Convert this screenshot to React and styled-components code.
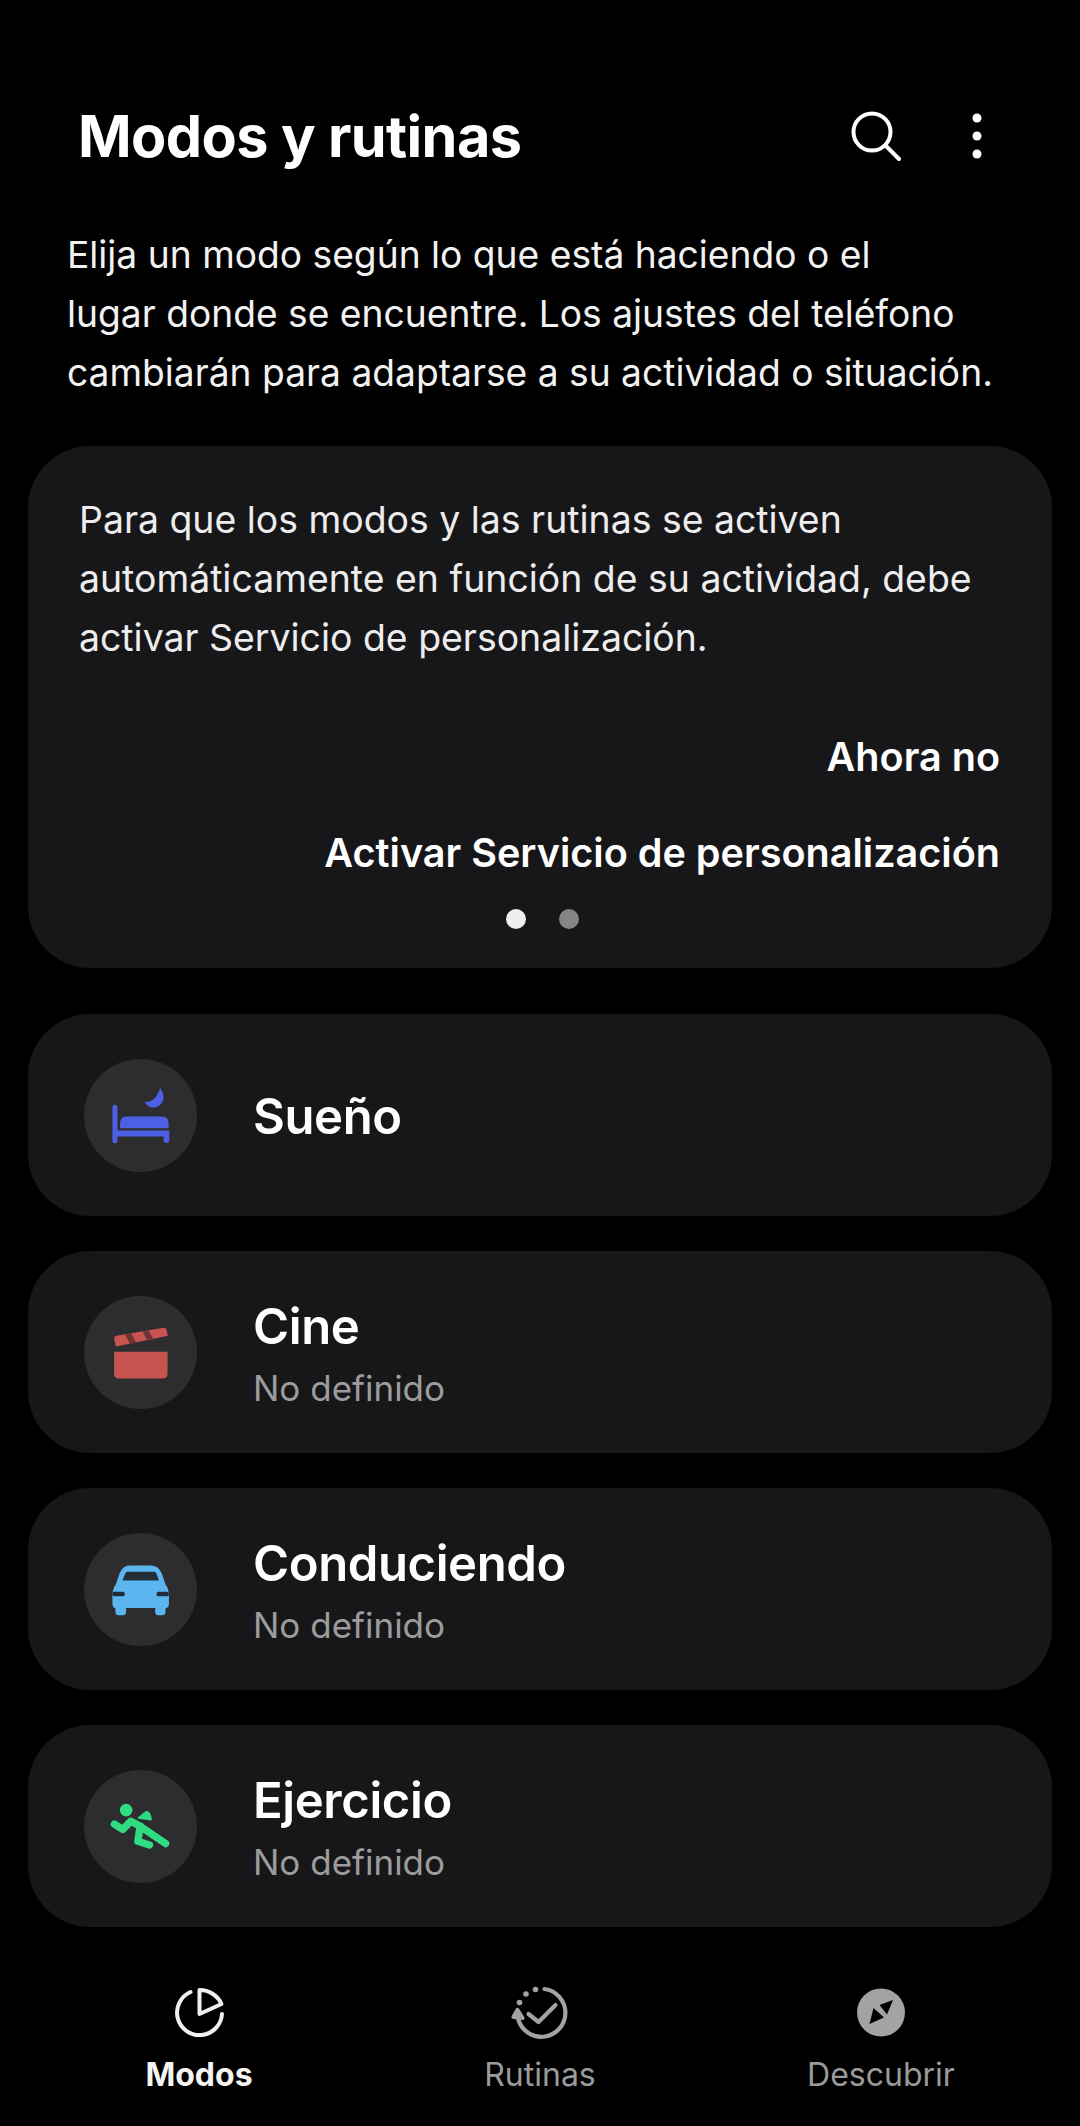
import React from 'react';
import styled, {createGlobalStyle} from 'styled-components';

const Global = createGlobalStyle`
  html, body {
    margin: 0;
    background: #000;
    font-family: Inter, "Noto Sans", sans-serif;
    color: #fff;
  }
`;

const Page = styled.div`
  width: 1080px;
  height: 2126px;
  display: flex;
  flex-direction: column;
  overflow: hidden;
`;

const Header = styled.header`
  height: 170px;
  padding: 102px 95px 0 78px;
  box-sizing: border-box;
  display: flex;
  justify-content: space-between;
  align-items: center;
`;

const Title = styled.h1`
  margin: 0;
  font-size: 57.6px;
  line-height: 68px;
  font-weight: 700;
  letter-spacing: -0.6px;
`;

const Actions = styled.div`
  display: flex;
  align-items: center;
  gap: 68px;
`;

const Intro = styled.p`
  margin: 55px 0 0 67px;
  padding: 0;
  font-size: 37.2px;
  line-height: 59px;
  white-space: pre-line;
  color: #f2f2f2;
`;

const Notice = styled.section`
  margin: 44px 28px 0;
  height: 522px;
  box-sizing: border-box;
  padding: 44px 52px 0 51px;
  border-radius: 62px;
  background: #17171a;
  display: flex;
  flex-direction: column;
`;

const NoticeText = styled.p`
  margin: 0;
  font-size: 37.4px;
  line-height: 59px;
  white-space: pre-line;
  color: #ededed;
`;

const NoticeAction = styled.button`
  border: 0;
  padding: 0;
  background: none;
  align-self: flex-end;
  color: #fff;
  font-family: inherit;
  font-size: 39.6px;
  line-height: 46px;
  font-weight: 600;
  margin-top: ${p => p.$top}px;
`;

const Dots = styled.div`
  display: flex;
  justify-content: center;
  gap: 33px;
  margin-top: 33px;
  padding-left: 5px;
`;

const Dot = styled.span`
  width: 20px;
  height: 20px;
  border-radius: 50%;
  background: ${p => (p.$active ? '#efefef' : '#858585')};
`;

const ModeList = styled.div`
  margin: 46px 28px 0;
  display: flex;
  flex-direction: column;
  gap: 35px;
`;

const ModeRow = styled.div`
  height: 202px;
  border-radius: 62px;
  background: #17171a;
  padding-left: 56px;
  display: flex;
  align-items: center;
  gap: 56px;
`;

const IconCircle = styled.div`
  width: 113px;
  height: 113px;
  flex: none;
  border-radius: 50%;
  background: #2d2d2f;
  display: flex;
  align-items: center;
  justify-content: center;
`;

const ModeText = styled.div`
  padding-top: 4px;
`;

const ModeName = styled.div`
  font-size: 49px;
  line-height: 60px;
  font-weight: 600;
  letter-spacing: -0.4px;
`;

const ModeState = styled.div`
  margin-top: 8px;
  font-size: 35px;
  line-height: 46px;
  color: #9c9c9c;
`;

const Nav = styled.nav`
  margin-top: 45px;
  display: grid;
  grid-template-columns: repeat(3, 341px);
  justify-content: center;
`;

const NavItem = styled.div`
  display: flex;
  flex-direction: column;
  align-items: center;
  gap: 2px;
  font-size: 32px;
  line-height: 42px;
  font-weight: ${p => (p.$active ? 700 : 400)};
  color: ${p => (p.$active ? '#f4f4f4' : '#9a9a9a')};
`;

const SearchIcon = () => (
  <svg width="50" height="50" viewBox="0 0 50 50" fill="none" stroke="#fff" strokeWidth="4" strokeLinecap="round">
    <circle cx="21" cy="21" r="18.5" />
    <path d="M34.5 34.5 L48 48" />
  </svg>
);

const MoreIcon = () => (
  <svg width="16" height="56" viewBox="0 0 16 56" fill="#fff">
    <circle cx="8" cy="10" r="4.5" />
    <circle cx="8" cy="28" r="4.5" />
    <circle cx="8" cy="46" r="4.5" />
  </svg>
);

const BedIcon = () => (
  <svg width="113" height="113" viewBox="72 58 338 338" fill="#4c60e6">
    <rect x="157" y="195" width="15" height="115" rx="7" />
    <path d="M180 265 V250 Q180 230 200 230 H305 Q325 230 325 250 V265 Z" />
    <path d="M165 272 H327 V301 Q327 309 318 309 Q310 309 310 301 V290 H165 Z" />
    <path d="M300 145 Q322 178 296 198 Q272 214 252 186 Q284 192 300 145 Z" />
  </svg>
);

const ClapperIcon = () => (
  <svg width="113" height="113" viewBox="72 78 338 338">
    <path d="M162 205 Q162 198 169 197 L310 173 Q317 172 319 179 L323 197 L167 229 Z" fill="#c85450" />
    <path d="M195 193 L213 189 L228 218 L210 222 Z M247 184 L265 181 L280 208 L262 212 Z" fill="#6b3533" />
    <path d="M162 245 H322 V309 Q322 325 306 325 H178 Q162 325 162 309 Z" fill="#c85450" />
  </svg>
);

const CarIcon = () => (
  <svg width="113" height="113" viewBox="72 68 338 338">
    <path
      fill="#5bb5ee"
      d="M210 165 H272 Q295 165 305 190 L316 222 Q326 235 326 255 V280 Q326 290 316 293 V305 Q316 314 304 314 H295 Q285 314 285 305 V292 H198 V305 Q198 314 188 314 H176 Q166 314 166 305 V293 Q157 290 157 280 V255 Q157 235 167 222 L178 190 Q187 165 210 165 Z"
    />
    <path d="M202 184 H282 Q287 184 289 190 L296 210 H187 L195 190 Q197 184 202 184 Z" fill="#232d38" />
    <rect x="157" y="244" width="37" height="13" rx="6" fill="#232d38" />
    <rect x="289" y="244" width="37" height="13" rx="6" fill="#232d38" />
  </svg>
);

const RunnerIcon = () => (
  <svg width="113" height="113" viewBox="72 60 338 338" fill="none" stroke="#2fdc82" strokeWidth="22" strokeLinecap="round" strokeLinejoin="round">
    <circle cx="198" cy="180" r="19" fill="#2fdc82" stroke="none" />
    <path d="M236 203 L258 186 Q268 184 272 208 Z" fill="#2fdc82" strokeWidth="6" />
    <path d="M163 222 L188 238 L212 213 L240 228 L316 280" />
    <path d="M240 228 L233 273 L268 284" />
  </svg>
);

const ModesIcon = ({color}) => (
  <svg width="80" height="80" viewBox="18.5 13 80 80" fill="none" stroke={color} strokeWidth="4" strokeLinecap="round" strokeLinejoin="round">
    <path d="M50 33 A22.5 22.5 0 1 0 81.5 55" />
    <path d="M59 31 V55 L81 45 A24 24 0 0 0 59 31 Z" />
  </svg>
);

const RoutinesIcon = ({color}) => (
  <svg width="80" height="80" viewBox="18.5 12 80 80" fill="none" stroke={color} strokeWidth="4.2" strokeLinecap="round" strokeLinejoin="round">
    <path d="M63 29 A24 24 0 1 1 37 60" />
    <path d="M47 54 L57 62 L74 45" />
    <path d="M32 57 L36 50 L41 58 Z" fill={color} />
    <circle cx="54" cy="29.5" r="2.8" fill={color} stroke="none" />
    <circle cx="44.5" cy="34" r="2.8" fill={color} stroke="none" />
    <circle cx="38" cy="42.5" r="2.8" fill={color} stroke="none" />
  </svg>
);

const DiscoverIcon = ({color}) => (
  <svg width="80" height="80" viewBox="21 14 80 80">
    <circle cx="61" cy="54.5" r="24" fill={color} />
    <path d="M73 42 L59.5 47 L67 56.5 Z M49.5 66 L53.5 50 L64 59.5 Z" fill="#000" />
  </svg>
);

const modes = [
  {name: 'Sueño', Icon: BedIcon},
  {name: 'Cine', state: 'No definido', Icon: ClapperIcon},
  {name: 'Conduciendo', state: 'No definido', Icon: CarIcon},
  {name: 'Ejercicio', state: 'No definido', Icon: RunnerIcon},
];

const tabs = [
  {label: 'Modos', Icon: ModesIcon, active: true},
  {label: 'Rutinas', Icon: RoutinesIcon},
  {label: 'Descubrir', Icon: DiscoverIcon},
];

export default function App() {
  return (
    <Page>
      <Global />
      <Header>
        <Title>Modos y rutinas</Title>
        <Actions>
          <SearchIcon />
          <MoreIcon />
        </Actions>
      </Header>
      <Intro>
        {'Elija un modo según lo que está haciendo o el\nlugar donde se encuentre. Los ajustes del teléfono\ncambiarán para adaptarse a su actividad o situación.'}
      </Intro>
      <Notice>
        <NoticeText>
          {'Para que los modos y las rutinas se activen\nautomáticamente en función de su actividad, debe\nactivar Servicio de personalización.'}
        </NoticeText>
        <NoticeAction $top={67}>Ahora no</NoticeAction>
        <NoticeAction $top={50}>Activar Servicio de personalización</NoticeAction>
        <Dots>
          <Dot $active />
          <Dot />
        </Dots>
      </Notice>
      <ModeList>
        {modes.map(({name, state, Icon}) => (
          <ModeRow key={name}>
            <IconCircle><Icon /></IconCircle>
            <ModeText>
              <ModeName>{name}</ModeName>
              {state && <ModeState>{state}</ModeState>}
            </ModeText>
          </ModeRow>
        ))}
      </ModeList>
      <Nav>
        {tabs.map(({label, Icon, active}) => (
          <NavItem key={label} $active={active}>
            <Icon color={active ? '#f0f0f0' : '#a3a3a3'} />
            {label}
          </NavItem>
        ))}
      </Nav>
    </Page>
  );
}
